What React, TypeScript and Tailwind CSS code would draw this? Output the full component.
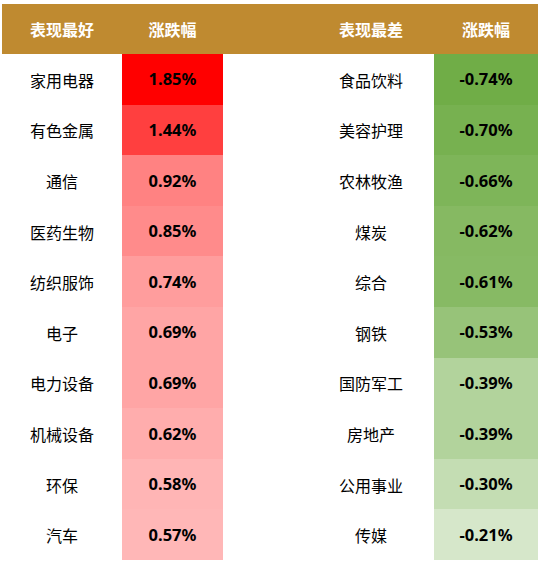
import React from "react";

const best: [string, string, string][] = [
  ["家用电器", "1.85%", "#ff0000"],
  ["有色金属", "1.44%", "#ff3f3f"],
  ["通信", "0.92%", "#ff8282"],
  ["医药生物", "0.85%", "#ff8b8b"],
  ["纺织服饰", "0.74%", "#ff9d9d"],
  ["电子", "0.69%", "#ffa5a5"],
  ["电力设备", "0.69%", "#ffa5a5"],
  ["机械设备", "0.62%", "#ffadad"],
  ["环保", "0.58%", "#ffb5b5"],
  ["汽车", "0.57%", "#ffb7b7"],
];

const worst: [string, string, string][] = [
  ["食品饮料", "-0.74%", "#70ad47"],
  ["美容护理", "-0.70%", "#77b150"],
  ["农林牧渔", "-0.66%", "#7eb559"],
  ["煤炭", "-0.62%", "#86b962"],
  ["综合", "-0.61%", "#87ba64"],
  ["钢铁", "-0.53%", "#97c379"],
  ["国防军工", "-0.39%", "#b2d39c"],
  ["房地产", "-0.39%", "#b2d39c"],
  ["公用事业", "-0.30%", "#c4ddb3"],
  ["传媒", "-0.21%", "#d6e7ca"],
];

const cjk = { fontFamily: '"Noto Sans CJK SC", "Noto Sans", sans-serif' };
const num = { fontFamily: '"Noto Sans", "Open Sans", sans-serif' };

export default function App() {
  return (
    <div className="w-[541px] h-[567px] bg-white pt-[4px] pl-[2px]">
      <div className="w-[536px]">
        <div
          className="flex h-[50px] items-center bg-[#bf8a30] text-white text-[16px] font-bold"
          style={cjk}
        >
          <div className="w-[120px] text-center">表现最好</div>
          <div className="w-[101px] text-center">涨跌幅</div>
          <div className="w-[85px]" />
          <div className="w-[126px] text-center">表现最差</div>
          <div className="w-[104px] text-center">涨跌幅</div>
        </div>
        {best.map((b, i) => {
          const w = worst[i];
          return (
            <div key={i} className="flex h-[50.6px] items-stretch text-black text-[16px]">
              <div className="w-[120px] flex items-center justify-center pt-[1px]" style={cjk}>
                {b[0]}
              </div>
              <div
                className="w-[101px] flex items-center justify-center font-bold text-[16.5px] pt-[1px]"
                style={{ ...num, backgroundColor: b[2] }}
              >
                {b[1]}
              </div>
              <div className="w-[85px]" />
              <div className="w-[126px] flex items-center justify-center pt-[1px]" style={cjk}>
                {w[0]}
              </div>
              <div
                className="w-[104px] flex items-center justify-center font-bold text-[16.5px] pt-[1px]"
                style={{ ...num, backgroundColor: w[2] }}
              >
                {w[1]}
              </div>
            </div>
          );
        })}
      </div>
    </div>
  );
}
